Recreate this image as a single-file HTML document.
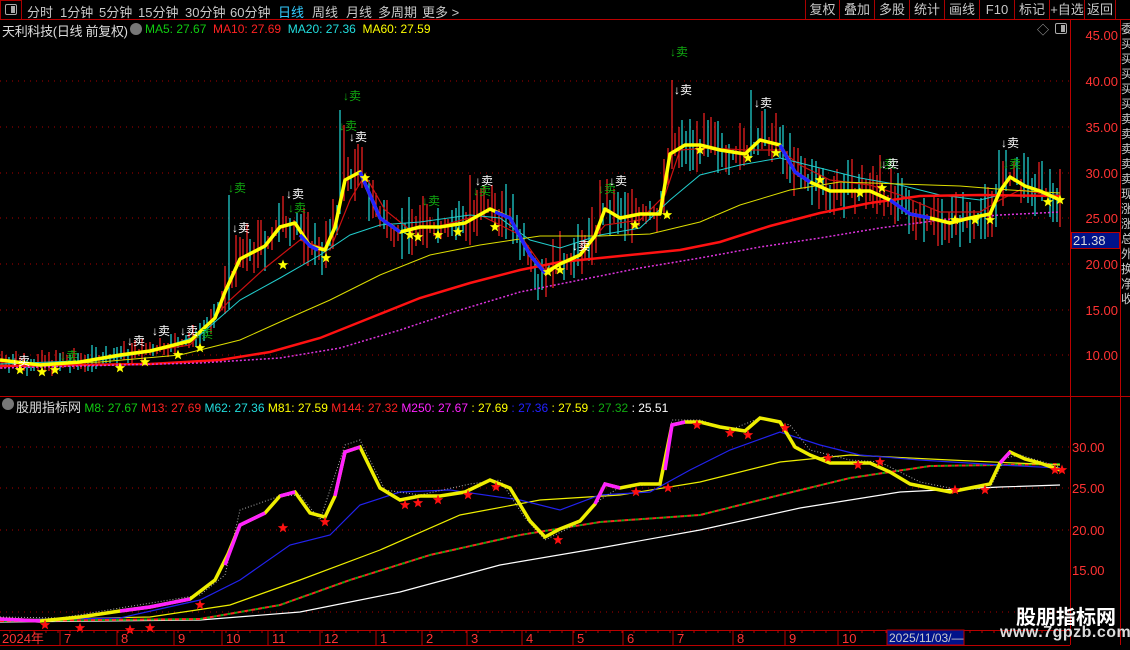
<!DOCTYPE html>
<html><head><meta charset="utf-8"><style>
*{margin:0;padding:0;box-sizing:border-box}
body{width:1130px;height:650px;background:#000;overflow:hidden;position:relative;font-family:"Liberation Sans","Noto Sans CJK SC",sans-serif;color:#c8c8c8}
.a{position:absolute;white-space:nowrap}
.tb{font-size:13px;top:2px;color:#c8c8c8}
.btn{position:absolute;top:0;height:19px;border-left:1px solid #a00;font-size:13px;color:#c8c8c8;text-align:center;line-height:19px}
.pl{position:absolute;right:12px;color:#f33;font-size:13px}
.sl{position:absolute;left:1072px;color:#f33;font-size:13px}
</style></head><body>
<div class="a" style="left:0;top:0;width:22px;height:20px;border:1px solid #a00"></div>
<div class="a" style="left:5px;top:4px;width:12px;height:11px;border:1px solid #aaa;border-radius:2px"><div style="position:absolute;right:1px;top:1px;width:4px;height:7px;background:#aaa"></div></div>
<div class="a tb" style="left:27px">分时</div>
<div class="a tb" style="left:60px">1分钟</div>
<div class="a tb" style="left:99px">5分钟</div>
<div class="a tb" style="left:138px">15分钟</div>
<div class="a tb" style="left:185px">30分钟</div>
<div class="a tb" style="left:230px">60分钟</div>
<div class="a tb" style="left:278px;color:#3cf">日线</div>
<div class="a tb" style="left:312px">周线</div>
<div class="a tb" style="left:346px">月线</div>
<div class="a tb" style="left:378px">多周期</div>
<div class="a tb" style="left:422px">更多 &gt;</div>
<div class="btn" style="left:805px;width:34px">复权</div>
<div class="btn" style="left:839px;width:35px">叠加</div>
<div class="btn" style="left:874px;width:35px">多股</div>
<div class="btn" style="left:909px;width:35px">统计</div>
<div class="btn" style="left:944px;width:35px">画线</div>
<div class="btn" style="left:979px;width:35px">F10</div>
<div class="btn" style="left:1014px;width:35px">标记</div>
<div class="btn" style="left:1049px;width:35px">+自选</div>
<div class="btn" style="left:1084px;width:32px;border-right:1px solid #a00">返回</div>
<div class="a" style="left:0;top:19px;width:1130px;height:1px;background:#b00"></div>

<div class="a" style="left:2px;top:21px;font-size:13px;color:#ddd;letter-spacing:-0.3px">天利科技(日线 前复权)</div>
<div class="a" style="left:130px;top:23px;width:12px;height:12px;border-radius:50%;background:#777"></div>
<div class="a" style="left:145px;top:22px;font-size:12px"><span style="color:#1c1">MA5: 27.67</span>&nbsp; <span style="color:#f22">MA10: 27.69</span>&nbsp; <span style="color:#2dd">MA20: 27.36</span>&nbsp; <span style="color:#ff0">MA60: 27.59</span></div>
<div class="a" style="left:1037px;top:21px;font-size:12px;color:#aaa">◇</div>
<div class="a" style="left:1055px;top:23px;width:12px;height:11px;border:1px solid #aaa;border-radius:2px"><div style="position:absolute;right:1px;top:1px;width:4px;height:7px;background:#aaa"></div></div>

<div class="a" style="left:1070px;top:20px;width:1px;height:625px;background:#b00"></div>
<div class="a" style="left:1120px;top:20px;width:1px;height:625px;background:#b00"></div>
<div class="a" style="left:0;top:396px;width:1130px;height:1px;background:#b00"></div>
<div class="a" style="left:0;top:630px;width:1070px;height:1px;background:#b00"></div>
<div class="a" style="left:0;top:645px;width:1070px;height:1px;background:#b00"></div>

<div class="pl" style="top:28px">45.00</div>
<div class="pl" style="top:74px">40.00</div>
<div class="pl" style="top:120px">35.00</div>
<div class="pl" style="top:166px">30.00</div>
<div class="pl" style="top:211px">25.00</div>
<div class="pl" style="top:257px">20.00</div>
<div class="pl" style="top:303px">15.00</div>
<div class="pl" style="top:348px">10.00</div>
<div class="a" style="left:1071px;top:232px;width:49px;height:17px;background:#00128a;border:1px solid #b00;color:#ddd;font-size:13px;padding-left:1px">21.38</div>
<div class="sl" style="top:440px">30.00</div>
<div class="sl" style="top:481px">25.00</div>
<div class="sl" style="top:523px">20.00</div>
<div class="sl" style="top:563px">15.00</div>

<div class="a" style="left:1121px;top:22px;width:9px;height:400px;color:#ccc;font-size:12px;line-height:15px;overflow:hidden">委<br>买<br>买<br>买<br>买<br>买<br>卖<br>卖<br>卖<br>卖<br>卖<br>现<br>涨<br>涨<br>总<br>外<br>换<br>净<br>收</div>

<div class="a" style="left:2px;top:398px;width:12px;height:12px;border-radius:50%;background:#777"></div>
<div class="a" style="left:16px;top:397px;font-size:12px"><span style="color:#ddd;font-size:13px">股朋指标网</span> <span style="color:#1c1">M8: 27.67</span> <span style="color:#f22">M13: 27.69</span> <span style="color:#2dd">M62: 27.36</span> <span style="color:#ff0">M81: 27.59</span> <span style="color:#f22">M144: 27.32</span> <span style="color:#f2f">M250: 27.67</span> <span style="color:#ff0">: 27.69</span> <span style="color:#22f">: 27.36</span> <span style="color:#ff0">: 27.59</span> <span style="color:#1a1">: 27.32</span> <span style="color:#fff">: 25.51</span></div>

<svg class="a" style="left:0;top:0" width="1070" height="650" id="sv">
<g stroke="#a00" stroke-dasharray="1 5" stroke-width="1">
<line x1="0" y1="81" x2="1070" y2="81"/><line x1="0" y1="127" x2="1070" y2="127"/><line x1="0" y1="173" x2="1070" y2="173"/><line x1="0" y1="218" x2="1070" y2="218"/><line x1="0" y1="264" x2="1070" y2="264"/><line x1="0" y1="310" x2="1070" y2="310"/><line x1="0" y1="355" x2="1070" y2="355"/>
<line x1="0" y1="447" x2="1070" y2="447"/><line x1="0" y1="488" x2="1070" y2="488"/><line x1="0" y1="530" x2="1070" y2="530"/><line x1="0" y1="612" x2="1070" y2="612"/>
</g>
<g id="cd"></g>
<polyline fill="none" stroke="#c11" stroke-width="1.2" points="0,362 60,364 120,356 190,345 230,300 265,268 300,240 330,250 350,200 365,175 385,210 410,230 440,226 480,215 520,235 545,270 580,255 605,225 640,220 665,195 680,150 710,148 745,150 780,150 800,165 830,180 870,185 900,195 940,212 980,212 1000,200 1020,190 1060,196"/>
<polyline fill="none" stroke="#2cc" stroke-width="1" points="0,364 100,360 150,352 200,335 240,300 280,278 320,255 350,235 380,225 420,222 470,215 500,218 530,240 560,248 600,235 640,228 670,200 700,175 740,165 780,158 820,168 860,178 900,185 940,195 980,200 1000,195 1060,195"/>
<polyline fill="none" stroke="#dd0" stroke-width="1" points="0,366 100,362 180,355 240,340 280,322 330,300 380,275 430,255 480,245 540,236 600,236 650,234 700,222 740,205 790,190 840,182 900,184 960,186 1010,190 1060,193"/>
<polyline fill="none" stroke="#f11" stroke-width="2.5" points="0,366 150,364 220,360 270,352 320,338 370,318 420,298 470,283 520,270 560,262 620,256 680,250 720,242 770,226 820,213 870,203 920,196 980,195 1060,196"/>
<polyline fill="none" stroke="#d3d" stroke-width="1.5" stroke-dasharray="2 2" points="0,368 200,363 280,358 340,348 400,330 460,310 520,292 580,280 640,268 700,258 760,247 820,238 880,228 940,220 1000,215 1060,212"/>
<polyline fill="none" stroke="#ff0" stroke-width="3.5" stroke-linejoin="round" points="0,360 40,365 80,362 120,355 150,351 190,341 215,318 225,292 240,259 265,246 280,227 295,223 310,246 325,250 335,227 345,180 360,172 380,218 400,232 420,227 440,227 465,223 490,209 510,218 530,255 545,273 560,264 580,255 595,236 605,209 620,218 640,214 660,214 670,154 685,145 700,145 720,150 745,154 760,140 780,145 795,172 810,182 830,191 850,191 870,191 890,200 910,214 930,218 950,223 970,218 990,214 1000,191 1010,177 1025,186 1040,191 1060,200"/>
<g fill="none" stroke="#22f" stroke-width="3.5"><polyline points="360,172 380,218 400,232"/><polyline points="495,212 510,218 530,255 545,273"/><polyline points="780,145 795,172 810,182"/><polyline points="890,200 910,214 930,218"/><polyline points="300,235 310,246 318,250"/></g>
<polyline fill="none" stroke="#fff" stroke-width="1.2" points="0,622 100,621 200,620 300,612 400,592 500,565 600,548 700,530 800,508 900,492 1000,487 1060,485"/>
<polyline fill="none" stroke="#f22" stroke-width="2" stroke-dasharray="4 3" points="0,621 200,619 280,605 350,580 430,555 520,535 600,522 700,515 780,495 850,478 930,466 1060,464"/>
<polyline fill="none" stroke="#1a1" stroke-width="2" stroke-dasharray="3 4" stroke-dashoffset="3" points="0,621 200,619 280,605 350,580 430,555 520,535 600,522 700,515 780,495 850,478 930,466 1060,464"/>
<polyline fill="none" stroke="#ee0" stroke-width="1.2" points="0,620 150,617 230,605 300,580 380,550 460,515 540,500 620,495 700,482 780,462 850,455 950,460 1060,465"/>
<polyline fill="none" stroke="#22e" stroke-width="1.2" points="0,620 120,618 200,600 240,580 290,545 330,535 360,505 400,492 450,490 520,500 560,510 600,495 650,492 690,470 730,450 780,432 820,445 860,455 920,460 1000,465 1060,468"/>
<polyline fill="none" stroke="#aaa" stroke-width="1" stroke-dasharray="1 2" points="0,617 60,618 120,608 200,595 225,575 240,510 280,496 300,495 320,520 345,445 360,440 385,490 420,495 470,484 500,480 525,518 545,540 575,525 600,500 620,487 660,484 672,420 700,420 730,430 760,418 790,425 810,450 850,460 880,462 920,482 960,490 990,488 1005,458 1020,455 1060,467"/>
<polyline fill="none" stroke="#ee0" stroke-width="3.5" points="0,619 40,621 80,617 120,611 150,607 190,599 215,580 228,554 240,525 265,513 280,496 295,492 310,513 325,517 335,496 345,452 360,447 380,488 400,500 420,496 440,496 465,492 490,480 510,488 530,521 545,537 560,529 580,521 595,504 605,484 620,488 640,484 660,484 672,425 685,422 700,422 720,427 745,431 760,418 780,422 795,447 810,455 830,463 850,463 870,463 890,472 910,484 930,488 950,492 970,488 990,484 1000,463 1010,452 1025,459 1040,463 1060,470"/>
<g fill="none" stroke="#f2f" stroke-width="3.5"><polyline points="225,565 240,525 265,513"/><polyline points="280,496 295,492"/><polyline points="335,496 345,452 360,447"/><polyline points="595,504 605,484 620,488"/><polyline points="665,470 672,425 685,422"/><polyline points="1000,463 1010,452"/><polyline points="0,619 40,621"/><polyline points="120,611 150,607 190,599"/></g>
<g id="st"></g>
<g font-size="12" font-family="Liberation Sans,Noto Sans CJK SC,sans-serif">
<text x="12" y="365" fill="#fff">↓卖</text><text x="60" y="360" fill="#1a1">↓卖</text><text x="127" y="345" fill="#fff">↓卖</text><text x="152" y="335" fill="#fff">↓卖</text><text x="180" y="335" fill="#fff">↓卖</text><text x="195" y="338" fill="#1a1">↓卖</text>
<text x="228" y="192" fill="#1a1">↓卖</text><text x="232" y="232" fill="#fff">↓卖</text><text x="286" y="198" fill="#fff">↓卖</text><text x="288" y="212" fill="#1a1">↓卖</text>
<text x="343" y="100" fill="#1a1">↓卖</text><text x="339" y="130" fill="#1a1">↓卖</text><text x="349" y="141" fill="#fff">↓卖</text><text x="422" y="205" fill="#1a1">↓卖</text><text x="475" y="185" fill="#fff">↓卖</text><text x="473" y="195" fill="#1a1">↓卖</text>
<text x="572" y="250" fill="#fff">↓卖</text><text x="598" y="193" fill="#1a1">↓卖</text><text x="609" y="185" fill="#fff">↓卖</text><text x="670" y="56" fill="#1a1">↓卖</text><text x="674" y="94" fill="#fff">↓卖</text>
<text x="754" y="107" fill="#fff">↓卖</text><text x="878" y="168" fill="#1a1">↓卖</text><text x="881" y="168" fill="#fff">↓卖</text><text x="1001" y="147" fill="#fff">↓卖</text><text x="1003" y="168" fill="#1a1">↓卖</text>
</g>
<g font-size="13" fill="#f33" font-family="Liberation Sans,Noto Sans CJK SC,sans-serif">
<text x="2" y="643">2024年</text><text x="64" y="643">7</text><text x="121" y="643">8</text><text x="178" y="643">9</text><text x="226" y="643">10</text><text x="272" y="643">11</text><text x="324" y="643">12</text><text x="380" y="643">1</text><text x="426" y="643">2</text><text x="471" y="643">3</text><text x="526" y="643">4</text><text x="577" y="643">5</text><text x="627" y="643">6</text><text x="677" y="643">7</text><text x="737" y="643">8</text><text x="789" y="643">9</text><text x="842" y="643">10</text>
</g>
<g stroke="#b00" id="tk"></g>
<rect x="887" y="630" width="77" height="15" fill="#00128a" stroke="#b00"/>
<text x="889" y="642" fill="#ccc" font-size="12" font-family="Liberation Sans,sans-serif">2025/11/03/—</text>
</svg>
<div class="a" style="left:1016px;top:601px;font-size:20px;font-weight:bold;color:#fff">股朋指标网</div>
<div class="a" style="left:1000px;top:624px;font-size:16px;font-weight:bold;color:#ddd;letter-spacing:0.5px">www.7gpzb.com</div>
<script>
var P=[[0,360],[40,365],[80,362],[120,355],[150,351],[190,341],[215,318],[225,292],[240,259],[265,246],[280,227],[295,223],[310,246],[325,250],[335,227],[345,180],[360,172],[380,218],[400,232],[420,227],[440,227],[465,223],[490,209],[510,218],[530,255],[545,273],[560,264],[580,255],[595,236],[605,209],[620,218],[640,214],[660,214],[670,154],[685,145],[700,145],[720,150],[745,154],[760,140],[780,145],[795,172],[810,182],[830,191],[850,191],[870,191],[890,200],[910,214],[930,218],[950,223],[970,218],[990,214],[1000,191],[1010,177],[1025,186],[1040,191],[1060,200]];
function yAt(x){for(var i=1;i<P.length;i++){if(x<=P[i][0]){var a=P[i-1],b=P[i];return a[1]+(b[1]-a[1])*(x-a[0])/(b[0]-a[0]);}}return 200;}
var s=7,h='';function r(){s=(s*9301+49297)%233280;return s/233280;}
var sp={670:55,672:80,752:90,340:110,344:125,228:195,418:170,600:180,470:175,880:155,1000:150,538:300,585:235};
for(var x=2;x<1062;x+=3.6){var xi=Math.round(x),y=yAt(x),v=(y<300?1:0.4);var t=y-r()*30*v-3,b=y+r()*25*v+3;for(var k in sp){if(Math.abs(k-xi)<2)t=sp[k];}
var c=r()<0.55?'#f22':'#2dd';h+='<line x1="'+xi+'" y1="'+t.toFixed(0)+'" x2="'+xi+'" y2="'+b.toFixed(0)+'" stroke="'+c+'" stroke-width="1.2"/>';}
document.getElementById('cd').innerHTML=h;
function star(x,y,c){var p='';for(var i=0;i<10;i++){var a=Math.PI/5*i-Math.PI/2,rr=i%2?2.3:5.5;p+=(x+rr*Math.cos(a)).toFixed(1)+','+(y+rr*Math.sin(a)).toFixed(1)+' ';}return '<polygon points="'+p+'" fill="'+c+'"/>';}
var ys=[[20,370],[42,372],[55,370],[120,368],[145,362],[178,355],[200,348],[283,265],[326,258],[365,178],[410,235],[418,237],[438,235],[458,232],[495,227],[548,272],[560,270],[635,225],[667,215],[700,150],[748,158],[776,153],[820,180],[860,193],[882,188],[955,220],[975,220],[990,220],[1048,202],[1060,200]];
var rs=[[45,625],[80,628],[130,630],[150,628],[200,605],[283,528],[325,522],[405,505],[418,503],[438,500],[468,495],[496,487],[558,540],[636,492],[668,488],[697,425],[730,433],[748,435],[785,428],[828,458],[858,465],[880,462],[955,490],[985,490],[1055,470],[1062,470]];
var g='';ys.forEach(function(a){g+=star(a[0],a[1],'#ff0')});rs.forEach(function(a){g+=star(a[0],a[1],'#f11')});
document.getElementById('st').innerHTML=g;
var t='';for(var x=10;x<1070;x+=12){t+='<line x1="'+x+'" y1="630" x2="'+x+'" y2="633"/>';}[60,117,174,222,268,320,376,422,467,522,573,623,673,733,785,838].forEach(function(x){t+='<line x1="'+x+'" y1="630" x2="'+x+'" y2="645"/>'});
document.getElementById('tk').innerHTML=t;
</script>
</body></html>
